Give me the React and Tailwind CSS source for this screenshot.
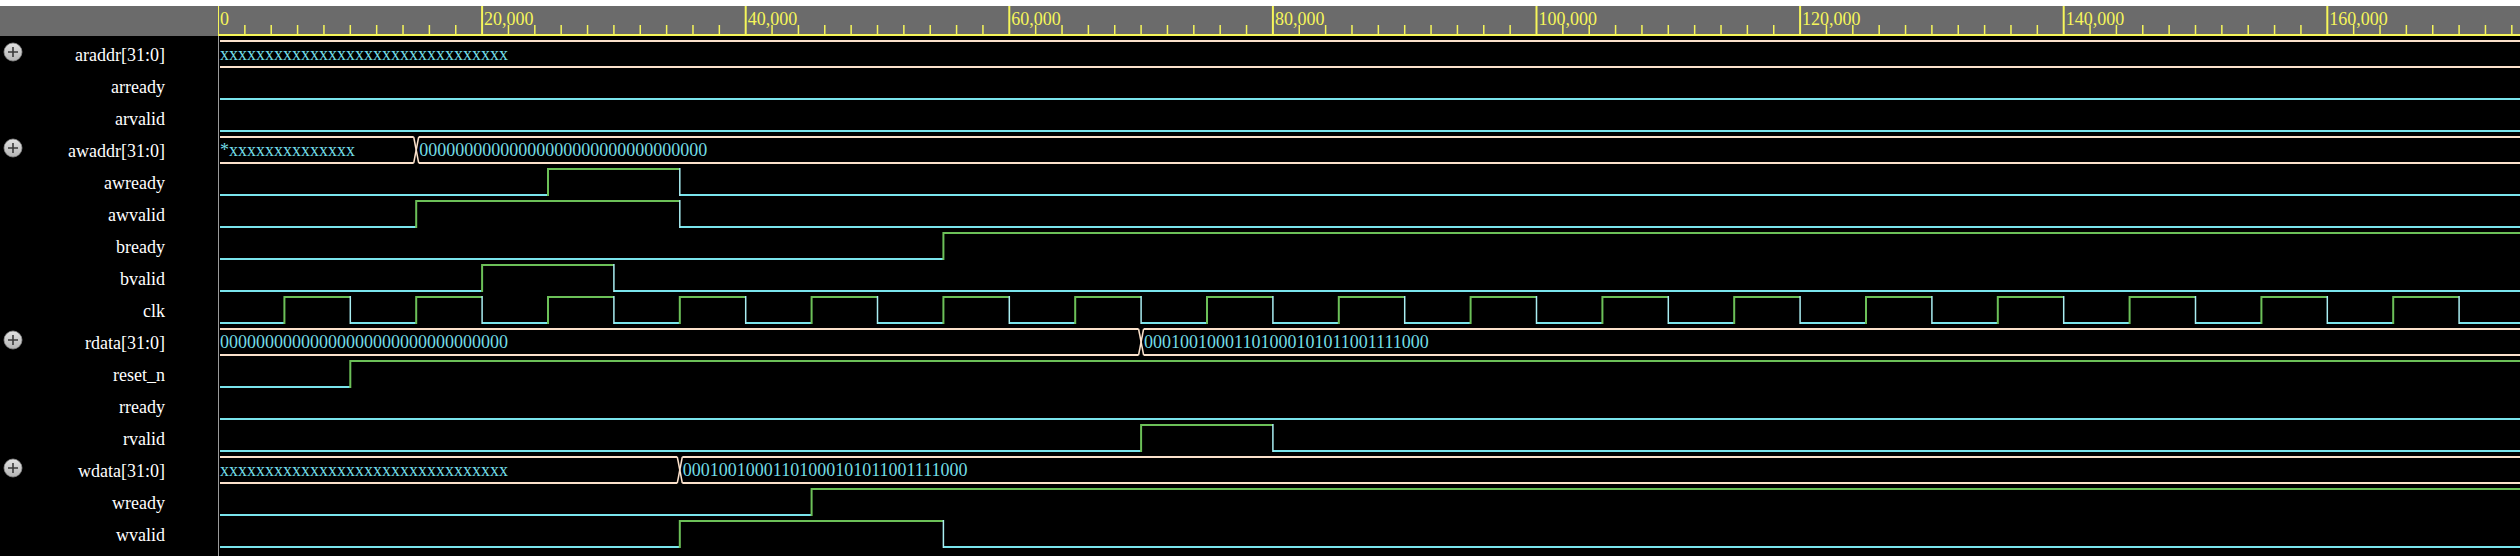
import React from 'react';

// time -> px inside a wave cell (cell starts right after the 1px divider)
const SCALE = 263.6 / 20000;
const x = (t) => t * SCALE - 0.5;
const END = 2320;

const LOW = 31;
const HIGH = 5;
const TOP = 5;
const BOT = 31;
const MID = 18;

const COLORS = {
  low: '#7ae4ec',
  high: '#6cc058',
  fall: '#a9eef2',
  bus: '#fbe1cb',
  text: '#72dde6',
  yellow: '#f6f65a',
};

const SERIF = 'Liberation Serif, serif';

const X32 = 'x'.repeat(32);
const Z32 = '0'.repeat(32);
const DATA = '00010010001101000101011001111000';

const clkEdges = Array.from({ length: 35 }, (_, i) => 5000 + i * 5000);

const signals = [
  { name: 'araddr[31:0]', bus: [{ t: 0, v: X32 }] },
  { name: 'arready', edges: [] },
  { name: 'arvalid', edges: [] },
  { name: 'awaddr[31:0]', bus: [{ t: 0, v: '*' + 'x'.repeat(14) }, { t: 15000, v: Z32 }] },
  { name: 'awready', edges: [25000, 35000] },
  { name: 'awvalid', edges: [15000, 35000] },
  { name: 'bready', edges: [55000] },
  { name: 'bvalid', edges: [20000, 30000] },
  { name: 'clk', edges: clkEdges },
  { name: 'rdata[31:0]', bus: [{ t: 0, v: Z32 }, { t: 70000, v: DATA }] },
  { name: 'reset_n', edges: [10000] },
  { name: 'rready', edges: [] },
  { name: 'rvalid', edges: [70000, 80000] },
  { name: 'wdata[31:0]', bus: [{ t: 0, v: X32 }, { t: 35000, v: DATA }] },
  { name: 'wready', edges: [45000] },
  { name: 'wvalid', edges: [35000, 55000] },
];

const PlusIcon = () => (
  <svg width="20" height="20" viewBox="0 0 20 20" className="block shrink-0">
    <defs>
      <linearGradient id="plusFill" x1="0" y1="0" x2="0" y2="1">
        <stop offset="0" stopColor="#e2e2e2" />
        <stop offset="1" stopColor="#b4b4b4" />
      </linearGradient>
    </defs>
    <circle cx="10" cy="10" r="9" fill="url(#plusFill)" stroke="#8c8c8c" strokeWidth="0.8" />
    <path d="M10 5v10M5 10h10" stroke="#3a3a3a" strokeWidth="1.6" />
  </svg>
);

const BitWave = ({ edges }) => {
  const segs = [];
  for (let i = 0; i <= edges.length; i++) {
    const a = i === 0 ? 1 : x(edges[i - 1]);
    const b = i === edges.length ? END : x(edges[i]);
    const hi = i % 2 === 1;
    segs.push(
      <line key={'s' + i} x1={a} x2={b} y1={hi ? HIGH : LOW} y2={hi ? HIGH : LOW} stroke={hi ? COLORS.high : COLORS.low} strokeWidth="2" />
    );
  }
  edges.forEach((t, i) => {
    const rising = i % 2 === 0;
    segs.push(
      <line key={'e' + i} x1={x(t)} x2={x(t)} y1={HIGH - 1} y2={LOW + 1} stroke={rising ? COLORS.high : COLORS.fall} strokeWidth={rising ? 2 : 1.5} />
    );
  });
  return (
    <svg width="100%" height="32" className="block">
      {segs}
    </svg>
  );
};

const BusWave = ({ bus }) => (
  <svg width="100%" height="32" className="block">
    {bus.map((seg, i) => {
      const next = bus[i + 1];
      const a = i === 0 ? 1 : x(seg.t) + 2.5;
      const b = next ? x(next.t) - 2.5 : END;
      return (
        <g key={i}>
          <line x1={a} x2={b} y1={TOP} y2={TOP} stroke={COLORS.bus} strokeWidth="2" />
          <line x1={a} x2={b} y1={BOT} y2={BOT} stroke={COLORS.bus} strokeWidth="2" />
          {i > 0 && (
            <>
              <line x1={x(seg.t) - 2.5} y1={TOP} x2={x(seg.t) + 2.5} y2={BOT} stroke={COLORS.bus} strokeWidth="1.5" />
              <line x1={x(seg.t) - 2.5} y1={BOT} x2={x(seg.t) + 2.5} y2={TOP} stroke={COLORS.bus} strokeWidth="1.5" />
            </>
          )}
          <text x={i === 0 ? 1 : x(seg.t) + 3} y={MID + 6} fill={COLORS.text} fontFamily={SERIF} fontSize="18">
            {seg.v}
          </text>
        </g>
      );
    })}
  </svg>
);

const Ruler = () => {
  const ticks = [];
  for (let k = 1; k <= 88; k++) {
    const t = k * 2000;
    const major = t % 20000 === 0;
    ticks.push(
      <line key={k} x1={x(t)} x2={x(t)} y1={major ? 0 : 19} y2={29} stroke={COLORS.yellow} strokeWidth={major ? 2 : 1.5} />
    );
  }
  const labels = [0, 20000, 40000, 60000, 80000, 100000, 120000, 140000, 160000];
  return (
    <svg width="100%" height="30" className="block">
      <rect x="0" y="28" width={END} height="2" fill={COLORS.yellow} />
      {ticks}
      {labels.map((t) => (
        <text key={t} x={t === 0 ? 1 : x(t) + 2} y="19" fill={COLORS.yellow} fontFamily={SERIF} fontSize="18">
          {t.toLocaleString('en-US')}
        </text>
      ))}
    </svg>
  );
};

export default function App() {
  return (
    <div className="flex h-[556px] w-[2520px] flex-col overflow-hidden bg-black">
      <div className="h-[6px] shrink-0 bg-white" />

      {/* ruler */}
      <div className="flex h-[30px] shrink-0 bg-[#6b6b6b]">
        <div className="w-[218px] shrink-0" />
        <div className="flex-1 border-l border-[#f6f65a]">
          <Ruler />
        </div>
      </div>

      {/* signal rows */}
      {signals.map((s) => (
        <div key={s.name} className="flex h-8 shrink-0">
          <div className="flex w-[218px] shrink-0 items-center pl-[3px] pr-[53px]">
            {s.bus ? <PlusIcon /> : null}
            <span className="ml-auto mt-[5px] font-['Liberation_Serif',serif] text-[18px] leading-none text-white">
              {s.name}
            </span>
          </div>
          <div className="flex-1 border-l border-[#9a9a9a]">
            {s.bus ? <BusWave bus={s.bus} /> : <BitWave edges={s.edges} />}
          </div>
        </div>
      ))}

      <div className="flex flex-1">
        <div className="w-[218px] shrink-0" />
        <div className="flex-1 border-l border-[#9a9a9a]" />
      </div>
    </div>
  );
}
